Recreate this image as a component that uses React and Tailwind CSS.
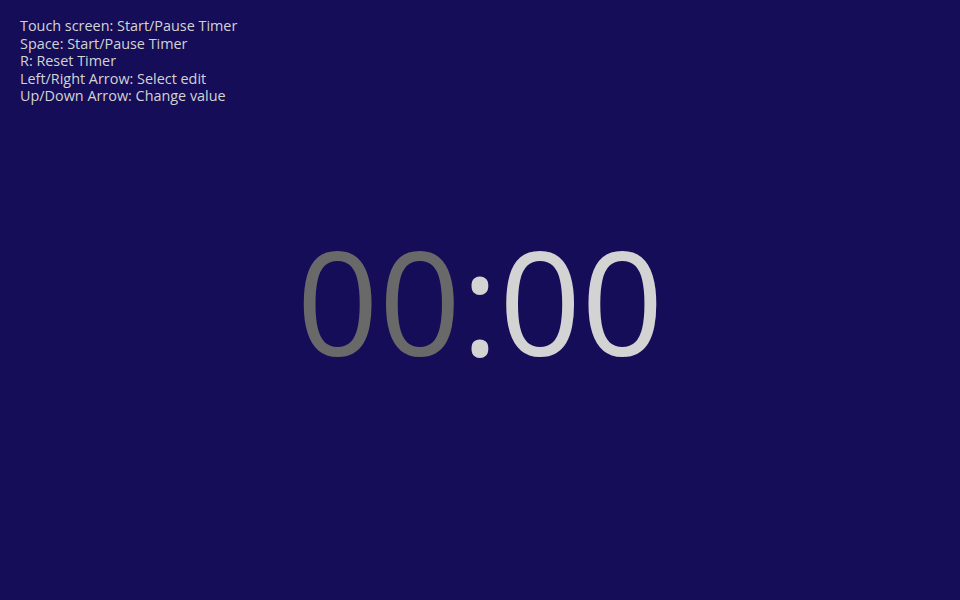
export default function App() {
  return (
    <div className="relative h-[600px] w-[960px] overflow-hidden bg-[#150d58] font-['Open_Sans',sans-serif] text-[#d3d3d3]">
      <div className="absolute left-5 top-[17px] text-[14.4px] leading-[17.5px]">
        <div>Touch screen: Start/Pause Timer</div>
        <div>Space: Start/Pause Timer</div>
        <div>R: Reset Timer</div>
        <div>Left/Right Arrow: Select edit</div>
        <div>Up/Down Arrow: Change value</div>
      </div>
      <div className="flex h-full items-center justify-center">
        <div className="text-[144px] leading-none">
          <span className="text-[#696969]">00</span>
          <span>:</span>
          <span>00</span>
        </div>
      </div>
    </div>
  )
}
